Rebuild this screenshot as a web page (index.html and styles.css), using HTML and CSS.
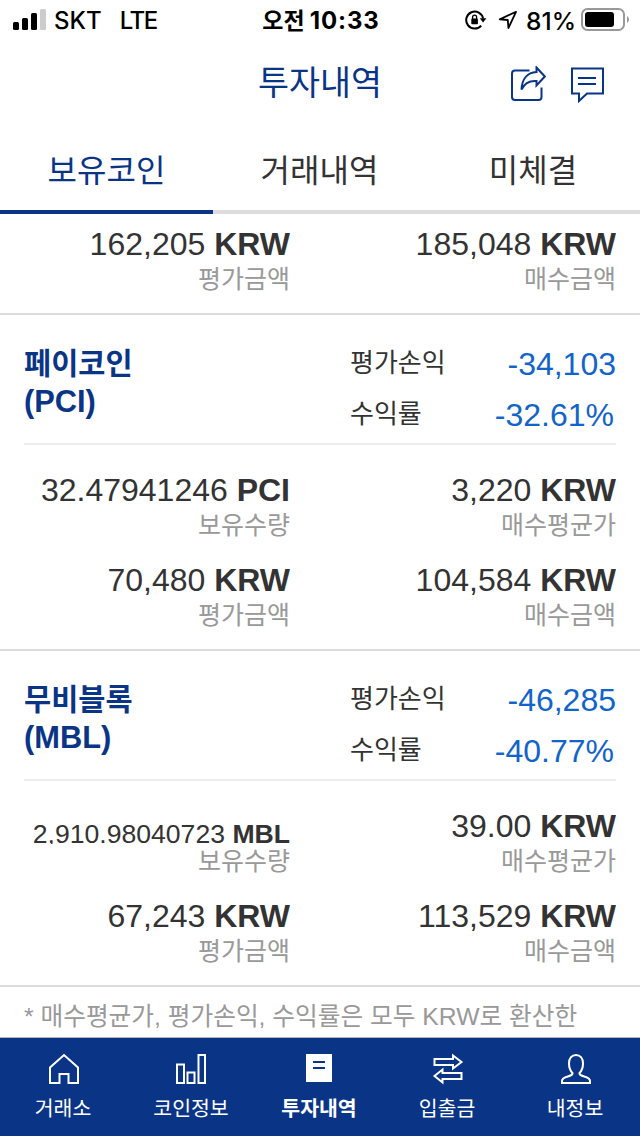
FILE: index.html
```
<!DOCTYPE html>
<html lang="ko">
<head>
    <meta charset="UTF-8">
    <meta name="viewport" content="width=device-width, initial-scale=1.0">
    <title>투자내역</title>
    <link rel="stylesheet" href="styles.css">
</head>
<body>
    <div class="app">
        <div class="status-bar">
            <div class="status-left">
                <svg class="signal" width="33" height="21" viewBox="0 0 33 21">
                    <rect x="0" y="13" width="6" height="8" rx="1.5"/>
                    <rect x="9" y="9" width="6" height="12" rx="1.5"/>
                    <rect x="18" y="4" width="6" height="17" rx="1.5"/>
                    <rect x="27" y="0" width="6" height="21" rx="1.5" fill="#ccc"/>
                </svg>
                <span class="carrier">SKT</span>
                <span class="network">LTE</span>
            </div>
            <div class="status-time"><span class="ampm">오전</span><span class="clock">10:33</span></div>
            <div class="status-right">
                <svg width="22" height="20" viewBox="0 0 22 20">
                    <path d="M18.1 8.6A8.5 8.5 0 1 0 16.2 15.6" fill="none" stroke="#000" stroke-width="2"/>
                    <path d="M14.8 8.2h6.6l-3.3 4.4z"/>
                    <rect x="6.3" y="8.6" width="6.6" height="5.6" rx="0.8"/>
                    <path d="M7.6 9V7.2a2 2 0 0 1 4 0V9" fill="none" stroke="#000" stroke-width="1.3"/>
                </svg>
                <svg class="location" width="20" height="20" viewBox="0 0 20 20">
                    <path d="M18 1.8L1.8 9.4l8 .6.6 8z" fill="none" stroke="#000" stroke-width="1.8" stroke-linejoin="round"/>
                </svg>
                <span class="percent">81%</span>
                <svg class="battery" width="48" height="24" viewBox="0 0 48 24">
                    <rect x="1" y="1" width="42" height="21" rx="5.5" fill="none" stroke="#999" stroke-width="2"/>
                    <rect x="4" y="4" width="29" height="15" rx="3"/>
                    <path d="M46 8c2.6 1.4 2.6 5.6 0 7z" fill="#999"/>
                </svg>
            </div>
        </div>

        <header class="header">
            <h1>투자내역</h1>
            <div class="header-icons">
                <svg width="36" height="36" viewBox="0 0 36 36">
                    <path d="M19.5 4.5H5Q2 4.5 2 7.5V31Q2 34 5 34H28.5Q31.5 34 31.5 31V21.5"/>
                    <path d="M26.5 1.5L34.8 10.5L26.5 19.5V15C19.5 14.5 14.5 17 11.5 23.5C12 13.5 17 6.5 26.5 6z"/>
                </svg>
                <svg width="34" height="37" viewBox="0 0 34 37">
                    <path d="M2 2.5H33V27.5H17L9 35V27.5H2z"/>
                    <path d="M8 12H26M8 18H26"/>
                </svg>
            </div>
        </header>

        <nav class="tabs">
            <a class="tab active">보유코인</a>
            <a class="tab">거래내역</a>
            <a class="tab">미체결</a>
        </nav>

        <main class="list">
            <section class="coin partial">
                <div class="coin-body">
                    <div class="cell">
                        <div class="value">162,205 <b>KRW</b></div>
                        <div class="label">평가금액</div>
                    </div>
                    <div class="cell">
                        <div class="value">185,048 <b>KRW</b></div>
                        <div class="label">매수금액</div>
                    </div>
                </div>
            </section>

            <section class="coin">
                <div class="coin-head">
                    <h2>페이코인<br><span class="symbol">(PCI)</span></h2>
                    <div class="profit">
                        <div class="profit-row"><span>평가손익</span><span class="down">-34,103</span></div>
                        <div class="profit-row"><span>수익률</span><span class="down rate">-32.61%</span></div>
                    </div>
                </div>
                <div class="coin-body">
                    <div class="cell">
                        <div class="value">32.47941246 <b>PCI</b></div>
                        <div class="label">보유수량</div>
                    </div>
                    <div class="cell">
                        <div class="value">3,220 <b>KRW</b></div>
                        <div class="label">매수평균가</div>
                    </div>
                    <div class="cell">
                        <div class="value">70,480 <b>KRW</b></div>
                        <div class="label">평가금액</div>
                    </div>
                    <div class="cell">
                        <div class="value">104,584 <b>KRW</b></div>
                        <div class="label">매수금액</div>
                    </div>
                </div>
            </section>

            <section class="coin">
                <div class="coin-head">
                    <h2>무비블록<br><span class="symbol">(MBL)</span></h2>
                    <div class="profit">
                        <div class="profit-row"><span>평가손익</span><span class="down">-46,285</span></div>
                        <div class="profit-row"><span>수익률</span><span class="down rate">-40.77%</span></div>
                    </div>
                </div>
                <div class="coin-body">
                    <div class="cell">
                        <div class="value small">2,910.98040723 <b>MBL</b></div>
                        <div class="label">보유수량</div>
                    </div>
                    <div class="cell">
                        <div class="value">39.00 <b>KRW</b></div>
                        <div class="label">매수평균가</div>
                    </div>
                    <div class="cell">
                        <div class="value">67,243 <b>KRW</b></div>
                        <div class="label">평가금액</div>
                    </div>
                    <div class="cell">
                        <div class="value">113,529 <b>KRW</b></div>
                        <div class="label">매수금액</div>
                    </div>
                </div>
            </section>

            <p class="note">* 매수평균가, 평가손익, 수익률은 모두 KRW로 환산한</p>
        </main>

        <nav class="bottom-nav">
            <a class="nav-item">
                <svg width="32" height="32" viewBox="0 0 32 32">
                    <path d="M2 30V14.5L16 2L30 14.5V30H20.5V21H11.5V30z"/>
                </svg>
                <span>거래소</span>
            </a>
            <a class="nav-item">
                <svg width="32" height="32" viewBox="0 0 32 32">
                    <path d="M1 11.5H8V30H1zM11.5 19.5H18.5V30H11.5zM22.5 2H29V30H22.5z"/>
                </svg>
                <span>코인정보</span>
            </a>
            <a class="nav-item active">
                <svg width="32" height="32" viewBox="0 0 32 32">
                    <rect x="2" y="1" width="26" height="28" fill="#fff" stroke="none"/>
                    <path class="doc-lines" d="M9 9H21M9 15H21"/>
                </svg>
                <span>투자내역</span>
            </a>
            <a class="nav-item">
                <svg width="32" height="32" viewBox="0 0 32 32">
                    <path d="M2.5 6H21V2.5L29.5 9L21 15.5V12H2.5zM29.5 20H10.5V16.5L2.5 23L10.5 29.5V26H29.5z"/>
                </svg>
                <span>입출금</span>
            </a>
            <a class="nav-item">
                <svg width="32" height="32" viewBox="0 0 32 32">
                    <path d="M12.5 20C10 17.5 9 14 9 10.5C9 5 12 2 16 2S23 5 23 10.5C23 14 22 17.5 19.5 20C19 24.5 30 22.5 30 28V30H2V28C2 22.5 13 24.5 12.5 20z"/>
                </svg>
                <span>내정보</span>
            </a>
        </nav>
    </div>
</body>
</html>
```
FILE: styles.css
```
* {
    box-sizing: border-box;
}

body {
    margin: 0;
    background-color: #fff;
    color: #333;
    font-family: "Liberation Sans", "Noto Sans CJK KR", sans-serif;
}

.app {
    width: 640px;
    height: 1136px;
    display: flex;
    flex-direction: column;
    overflow: hidden;
}

/* status bar */
.status-bar {
    height: 40px;
    display: grid;
    grid-template-columns: 1fr auto 1fr;
    align-items: center;
    padding: 0 11px 0 13px;
    color: #000;
    font-family: Inter, "Noto Sans CJK KR", sans-serif;
    font-size: 24px;
    font-weight: 500;
    line-height: 40px;
}

.status-left,
.status-right,
.status-time {
    display: flex;
    align-items: center;
    height: 40px;
}

.carrier,
.network,
.clock,
.percent {
    padding-top: 2px;
}

.signal {
    margin: 0 8px 2px 0;
}

.network {
    margin-left: 18px;
    letter-spacing: -1.5px;
}

.status-time {
    gap: 5px;
    font-weight: 700;
}

.ampm {
    padding-bottom: 3px;
    font-family: "Noto Sans CJK KR", sans-serif;
    font-size: 23px;
}

.clock {
    letter-spacing: 0.9px;
}

.status-right {
    justify-content: flex-end;
}

.location {
    margin: 0 8px 0 11px;
}

.percent {
    font-size: 24.5px;
}

.battery {
    margin-left: 5px;
}

/* header */
.header {
    height: 88px;
    display: grid;
    grid-template-columns: 1fr auto 1fr;
    align-items: center;
    padding: 0 36px;
    color: #0a3587;
}

.header h1 {
    grid-column: 2;
    margin: 0;
    padding-bottom: 6px;
    font-family: "Noto Sans CJK KR", sans-serif;
    font-size: 33.7px;
    font-weight: 400;
    line-height: 80px;
}

.header-icons {
    display: flex;
    justify-content: flex-end;
    gap: 24px;
}

.header-icons svg {
    fill: none;
    stroke: #0a3587;
    stroke-width: 2;
}

/* tabs */
.tabs {
    height: 86px;
    display: grid;
    grid-template-columns: 213px 213px 214px;
    grid-template-rows: 86px;
}

.tab {
    border-bottom: 4px solid #dcdcdc;
    font-family: "Noto Sans CJK KR", sans-serif;
    font-size: 32px;
    line-height: 80px;
    text-align: center;
}

.tab.active {
    color: #0a3587;
    border-color: #0a3587;
}

/* coin list */
.list {
    flex: 1;
    min-height: 0;
    overflow: hidden;
}

.coin {
    height: 336px;
    border-bottom: 2px solid #dcdcdc;
}

.coin.partial {
    height: 101px;
}

.coin-head {
    height: 130px;
    display: flex;
    margin: 0 24px;
    border-bottom: 2px solid #ededed;
}

.coin-head h2 {
    width: 326px;
    margin: 0;
    padding-top: 30px;
    color: #0a3587;
    font-size: 29.5px;
    font-weight: 700;
    line-height: 38px;
}

.symbol {
    font-size: 30.8px;
}

.profit {
    flex: 1;
    padding-top: 24px;
}

.profit-row {
    height: 51px;
    display: flex;
    justify-content: space-between;
    font-family: "Noto Sans CJK KR", sans-serif;
    font-size: 26px;
    line-height: 44px;
}

.down {
    color: #1264cb;
    font-family: "Liberation Sans", sans-serif;
    font-size: 32px;
    line-height: 51px;
}

.down.rate {
    padding-right: 2px;
}

.coin-body {
    display: grid;
    grid-template-columns: 266px 1fr;
    grid-auto-rows: 70px;
    row-gap: 20px;
    padding: 25px 24px 0;
}

.partial .coin-body {
    padding-top: 10px;
}

.cell {
    text-align: right;
}

.value {
    height: 38px;
    overflow: hidden;
    font-size: 32px;
    line-height: 40px;
    white-space: nowrap;
}

/* long amounts shrink and sit on the bottom edge */
.value.small {
    padding-top: 18px;
    font-size: 26.6px;
    line-height: 20px;
}

.label {
    color: #999;
    font-family: "Noto Sans CJK KR", sans-serif;
    font-size: 25px;
    line-height: 31px;
}

.note {
    margin: 0;
    padding: 12px 24px;
    color: #999;
    font-size: 24.7px;
    line-height: 36px;
    white-space: nowrap;
}

/* bottom navigation */
.bottom-nav {
    height: 99px;
    display: grid;
    grid-template-columns: repeat(5, 1fr);
    background-color: #0a3587;
    border-top: 1px solid #b5b5b5;
    color: #fff;
}

.nav-item {
    display: flex;
    flex-direction: column;
    align-items: center;
    padding-top: 15px;
    font-family: "Noto Sans CJK KR", sans-serif;
    font-size: 20.5px;
    line-height: 30px;
}

.nav-item.active {
    font-weight: 700;
}

.nav-item span {
    padding-right: 2px;
}

.nav-item svg {
    margin-bottom: 7px;
    fill: none;
    stroke: #fff;
    stroke-width: 2;
}

.nav-item .doc-lines {
    stroke: #0a3587;
}
```
